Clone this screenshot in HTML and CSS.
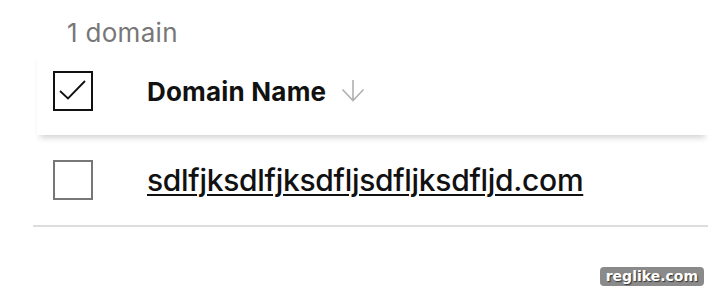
FILE: index.html
```html
<!DOCTYPE html>
<html>
<head>
<meta charset="utf-8">
<link rel="stylesheet" href="styles.css">
</head>
<body>
<div class="page">
  <div class="count">1 domain</div>
  <div class="table">
    <div class="head">
      <div class="cell-check">
        <span class="box checked">
          <svg width="36" height="36" viewBox="0 0 36 36"><path d="M5 18 L13 25.5 L30 8" fill="none" stroke="#111" stroke-width="1.8"/></svg>
        </span>
      </div>
      <div class="cell-name">
        <span class="title">Domain Name</span>
        <svg class="arrow" width="24" height="22" viewBox="0 0 24 22"><path d="M12 0 V20.5 M1.5 9.5 L12 20.5 L22.5 9.5" fill="none" stroke="#b0b0b0" stroke-width="1.6"/></svg>
      </div>
    </div>
    <div class="row">
      <div class="cell-check"><span class="box"></span></div>
      <div class="cell-name"><a class="link" href="#">sdlfjksdlfjksdfljsdfljksdfljd.com</a></div>
    </div>
  </div>
  <div class="watermark">reglike.com</div>
</div>
</body>
</html>
```
FILE: styles.css
```css
html, body {
  margin: 0;
  padding: 0;
  background: #fff;
}
body {
  font-family: Inter, "Open Sans", sans-serif;
  width: 708px;
  height: 290px;
  overflow: hidden;
}
.page {
  position: relative;
  height: 290px;
}
.count {
  padding: 18px 0 0 67px;
  font-size: 26px;
  color: #777;
  line-height: 30px;
  height: 33px;
  letter-spacing: 0.3px;
  box-sizing: content-box;
}
.table {
  margin-left: 33px;
}
.head {
  display: flex;
  align-items: center;
  height: 84px;
  padding-bottom: 4px;
  box-sizing: border-box;
  box-shadow: 0 6px 6px -3px rgba(0,0,0,0.17);
  position: relative;
  z-index: 1;
  margin-left: 4px;
}
.head .cell-check { padding-left: 16px; width: 110px; }
.row {
  display: flex;
  align-items: center;
  height: 90px;
  border-bottom: 2px solid #ddd;
}
.cell-check {
  width: 114px;
  padding-left: 20px;
  box-sizing: border-box;
  display: flex;
}
.box {
  width: 40px;
  height: 40px;
  box-sizing: border-box;
  border: 2px solid #777;
  display: flex;
  align-items: center;
  justify-content: center;
  background: #fff;
}
.box.checked { border-color: #111; }
.cell-name {
  display: flex;
  align-items: center;
}
.title {
  font-weight: 700;
  font-size: 26px;
  color: #111;
  letter-spacing: 0.2px;
}
.arrow { margin-left: 15px; }
.link {
  font-size: 30px;
  font-weight: 500;
  color: #111;
  text-decoration: underline;
  text-decoration-thickness: 2px;
  text-underline-offset: 3px;
  letter-spacing: -0.3px;
}
.watermark {
  position: absolute;
  right: 4px;
  bottom: 4px;
  background: #8a8a8a;
  color: #fff;
  font-family: "DejaVu Sans", sans-serif;
  font-weight: 700;
  font-size: 14px;
  padding: 1px 6px 2px;
  border-radius: 4px;
  text-shadow: 1px 1px 1px #333;
}
```
